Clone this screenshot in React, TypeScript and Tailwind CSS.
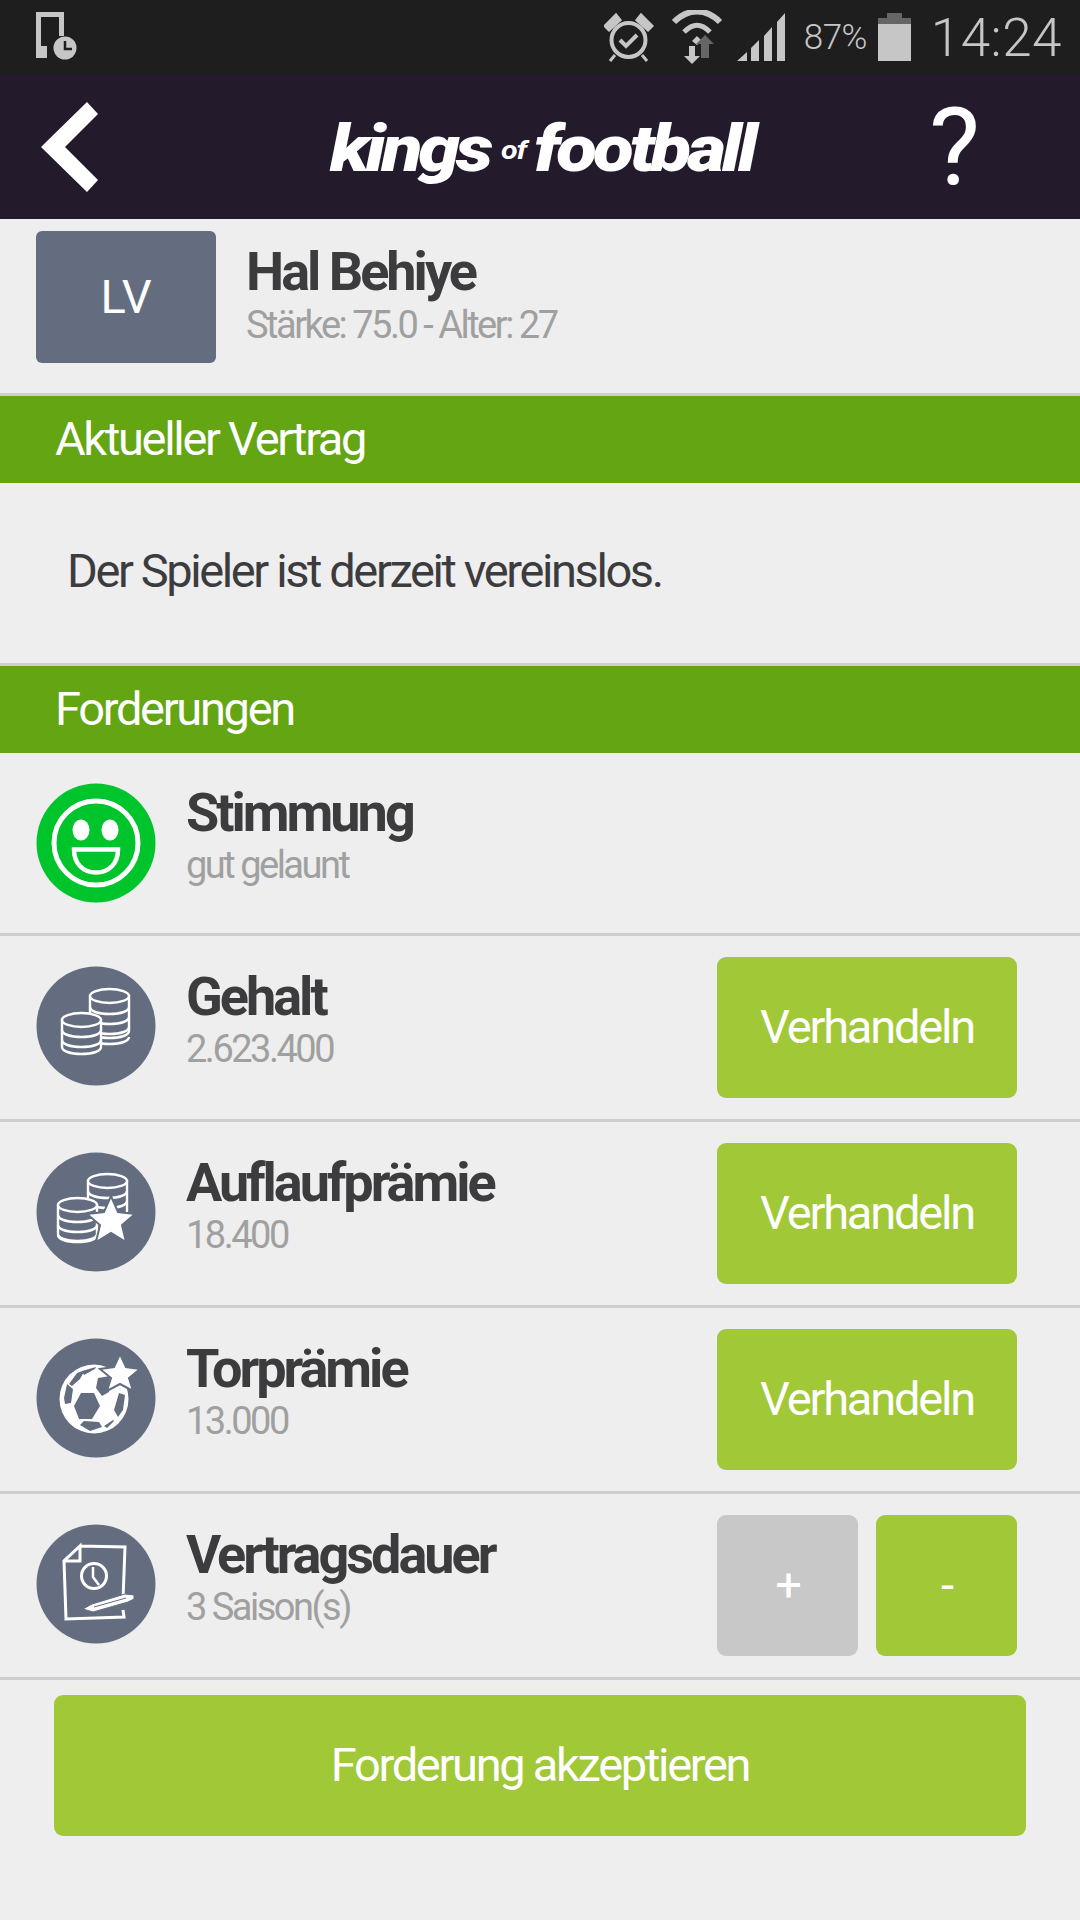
import React from 'react';

// one stack of coins, stripes = lines below the top coin
const Coins = ({ x, y, h, lines }: { x: number; y: number; h: number; lines: number[] }) => (
  <g transform={`translate(${x} ${y})`} fill="#646d7f" stroke="#fff" strokeWidth="2.4">
    <path d={`M1 8v${h}c0 4 8 7 19.5 7s19.5-3 19.5-7V8z`} />
    <ellipse cx="20.5" cy="8" rx="19.5" ry="7" />
    {lines.map((l) => (
      <path key={l} d={`M1 ${l}c0 4 8 7 19.5 7s19.5-3 19.5-7`} fill="none" />
    ))}
  </g>
);

const Circle = ({ children, color = '#646d7f' }: { children: React.ReactNode; color?: string }) => (
  <svg width="120" height="120" viewBox="0 0 120 120" className="shrink-0 block">
    <circle cx="60" cy="60" r="59.5" fill={color} />
    {children}
  </svg>
);

const Smiley = () => (
  <Circle color="#00c42b">
    <circle cx="60" cy="60" r="42" fill="none" stroke="#fff" strokeWidth="5" />
    <ellipse cx="45" cy="47" rx="8.5" ry="10.5" fill="#fff" />
    <ellipse cx="74" cy="47" rx="8.5" ry="10.5" fill="#fff" />
    <path d="M38 66.5h44c0 14-9 23-22 23s-22-9-22-23z" fill="none" stroke="#fff" strokeWidth="4.5" />
  </Circle>
);

const CoinsIcon = () => (
  <Circle>
    <Coins x={53} y={22} h={35} lines={[19, 29, 39, 49]} />
    <Coins x={25} y={46} h={27} lines={[18, 28]} />
  </Circle>
);

const BonusIcon = () => (
  <Circle>
    <Coins x={51} y={21} h={30} lines={[18, 28]} />
    <Coins x={21} y={45} h={29} lines={[18, 28, 38]} />
    <polygon points="75,44 82,60 99,62 86,73 90,90 75,81 60,90 64,73 51,62 68,60" fill="#fff" stroke="#646d7f" strokeWidth="2" />
  </Circle>
);

const BallIcon = () => (
  <Circle>
    <circle cx="58" cy="61" r="34.5" fill="#fff" />
    <polygon points="45,55 58,55 64,68 56,81 43,81 38,68" fill="#646d7f" />
    <path d="M33 46 41 35 49 32 44 41 36 48zM28 60 31 46 37 51 35 65 29 66zM46 33 60 29 59 31 48 37zM62 40 74 38 73 54 66 58 60 50zM44 87 48 83 63 84 66 89 54 93zM83 55 89 57 87 72 82 79 78 72zM68 88 77 82 78 83 71 90z" fill="#646d7f" />
    <polygon points="84,16 90,29 104,31 93,40 97,53 84,46 71,53 75,40 64,31 78,29" fill="#fff" stroke="#646d7f" strokeWidth="2" />
  </Circle>
);

const ContractIcon = () => (
  <Circle>
    <path d="M44 22 89 23 87 76M87 86 88 93 30 95 28 37 44 22V37L28 37" fill="none" stroke="#fff" strokeWidth="3" />
    <circle cx="58" cy="52" r="12.5" fill="none" stroke="#fff" strokeWidth="3" />
    <path d="M57 43v10l6 8" fill="none" stroke="#fff" strokeWidth="2.5" />
    <path d="M47 85 56 80 89 70 98 71 98 75 92 78 57 88z" fill="#fff" stroke="#646d7f" strokeWidth="1" />
    <path d="M58 83 90 74" stroke="#646d7f" strokeWidth="1" />
  </Circle>
);

const StatusBar = () => (
  <div className="h-[74px] bg-[#1e1e1e] flex items-center pl-[34px] pr-[18px] text-[#c6c6c6]">
    <svg width="44" height="50" viewBox="0 0 44 50">
      <path d="M2 0h28v24h-5V5H7v36h5v5H2z" fill="#c6c6c6" />
      <path d="M2 34h11v12H2z" fill="#c6c6c6" />
      <circle cx="31" cy="36" r="11.5" fill="#c6c6c6" />
      <path d="M31 29v8h7" fill="none" stroke="#1e1e1e" strokeWidth="2.5" />
    </svg>
    <div className="ml-auto flex items-center">
      <svg width="50" height="50" viewBox="0 0 50 50" className="mt-[2px]">
        <circle cx="24.5" cy="27" r="17" fill="none" stroke="#c6c6c6" strokeWidth="4" />
        <path d="M16 27l6 6 11-11" fill="none" stroke="#c6c6c6" strokeWidth="4" />
        <path d="M1 13 12 2 16 7 5 17zM48 13 37 2 33 7 44 17zM11 42l-5 6M38 42l5 6" fill="#c6c6c6" stroke="#c6c6c6" strokeWidth="3" />
      </svg>
      <svg width="52" height="54" viewBox="0 0 52 54" className="ml-[17px]">
        <path d="M3 12C17-2 35-2 49 12" fill="none" stroke="#c6c6c6" strokeWidth="6" />
        <path d="M13 22C22 13 30 13 39 22" fill="none" stroke="#c6c6c6" strokeWidth="5" />
        <path d="M21 31 26 26 31 31 26 35z" fill="#c6c6c6" />
        <path d="M18 36h6v10h5l-8 8-8-8h5z" fill="#c6c6c6" />
        <path d="M30 48V34h-5l9-9 9 9h-5v14z" fill="#666" />
      </svg>
      <svg width="48" height="48" viewBox="0 0 48 48" className="ml-[14px]">
        <path d="M0 48 10 39V48zM14 35 22 27V48H14zM27 23 35 14V48H27zM40 9 48 0V48H40z" fill="#c6c6c6" />
      </svg>
      <span className="ml-[19px] w-[70px] mt-[3px] text-[35px] font-[Roboto,sans-serif] font-light tracking-[-0.5px]">87%</span>
      <svg width="33" height="48" viewBox="0 0 33 48" className="ml-[4px]">
        <path d="M9 0h15v5h9v43H0V5h9z" fill="#c6c6c6" />
        <path d="M9 0h15v5h9v6H0V5h9z" fill="#666" />
      </svg>
      <span className="ml-[20px] mt-[3px] text-[53px] leading-none font-[Roboto,sans-serif] font-light tracking-[0.5px]">14:24</span>
    </div>
  </div>
);

const Header = () => (
  <div className="h-[145px] bg-[#231b2c] flex items-center text-white">
    <svg width="57" height="90" viewBox="0 0 57 90" className="ml-[41px]">
      <path d="M0 45 46 0 57 12 24 45 57 78 46 90z" fill="#fff" />
    </svg>
    <div className="ml-[232px] mt-[6px] origin-left scale-x-[1.17] flex items-baseline font-[Roboto,sans-serif] font-black italic text-[64px] leading-none tracking-[-3.5px]">
      <span>kings</span>
      <span className="text-[26px] tracking-[-1px] font-bold ml-[10px] mr-[7px] -translate-y-[12px]">of</span>
      <span>football</span>
    </div>
    <span className="ml-auto mr-[100px] text-[108px] leading-none font-[Roboto,sans-serif]">?</span>
  </div>
);

const Section = ({ title }: { title: string }) => (
  <div className="h-[90px] border-t-[3px] border-[#cecece] bg-[#63a513] pl-[55px] flex items-center text-white text-[47px] tracking-[-2.3px]">
    {title}
  </div>
);

const Btn = ({ label, grey, w = 'w-[300px]' }: { label: string; grey?: boolean; w?: string }) => (
  <div className={`h-[141px] ${w} rounded-[9px] flex items-center justify-center text-white text-[47px] tracking-[-2.2px] ${grey ? 'bg-[#c8c8c8]' : 'bg-[#a1c837]'}`}>
    {label}
  </div>
);

const Row = ({ icon, title, sub, children, h = 'h-[186px]' }: { icon: React.ReactNode; title: string; sub: string; children?: React.ReactNode; h?: string }) => (
  <div className={`${h} border-b-[3px] border-[#cecece] pl-[36px] pr-[63px] flex items-center`}>
    <div className={children ? 'mb-[3px]' : ''}>{icon}</div>
    <div className="ml-[30px] flex-1 pb-[15px]">
      <div className="text-[54px] leading-[56px] font-bold text-[#3c3c3e] tracking-[-3px]">{title}</div>
      <div className="text-[38px] leading-[44px] mt-[2px] text-[#a0a0a0] tracking-[-2.5px]">{sub}</div>
    </div>
    {children}
  </div>
);

const App: React.FC = () => {
  return (
    <div className="w-[1080px] h-[1920px] bg-[#eeeeee] font-[Roboto,sans-serif] overflow-hidden">
      <StatusBar />
      <Header />
      <div className="h-[174px] pl-[36px] pb-[18px] flex items-center">
        <div className="w-[180px] h-[132px] rounded-[6px] bg-[#646d7f] flex items-center justify-center text-white text-[47px]">LV</div>
        <div className="ml-[30px] pb-[3px]">
          <div className="text-[54px] leading-[56px] font-bold text-[#3c3c3e] tracking-[-3px]">Hal Behiye</div>
          <div className="text-[38px] leading-[44px] mt-[3px] text-[#a0a0a0] tracking-[-2.5px]">Stärke: 75.0 - Alter: 27</div>
        </div>
      </div>
      <Section title="Aktueller Vertrag" />
      <div className="h-[180px] pl-[67px] pb-[4px] flex items-center text-[47px] text-[#3c3c3e] tracking-[-2.4px]">Der Spieler ist derzeit vereinslos.</div>
      <Section title="Forderungen" />
      <Row icon={<Smiley />} title="Stimmung" sub="gut gelaunt" h="h-[183px]" />
      <Row icon={<CoinsIcon />} title="Gehalt" sub="2.623.400"><Btn label="Verhandeln" /></Row>
      <Row icon={<BonusIcon />} title="Auflaufprämie" sub="18.400"><Btn label="Verhandeln" /></Row>
      <Row icon={<BallIcon />} title="Torprämie" sub="13.000"><Btn label="Verhandeln" /></Row>
      <Row icon={<ContractIcon />} title="Vertragsdauer" sub="3 Saison(s)">
        <div className="flex gap-[18px]">
          <Btn label="+" grey w="w-[141px]" />
          <Btn label="-" w="w-[141px]" />
        </div>
      </Row>
      <div className="mt-[15px] mx-[54px] h-[141px] rounded-[9px] bg-[#a1c837] flex items-center justify-center text-white text-[47px] tracking-[-2.3px]">Forderung akzeptieren</div>
    </div>
  );
};

export default App;
